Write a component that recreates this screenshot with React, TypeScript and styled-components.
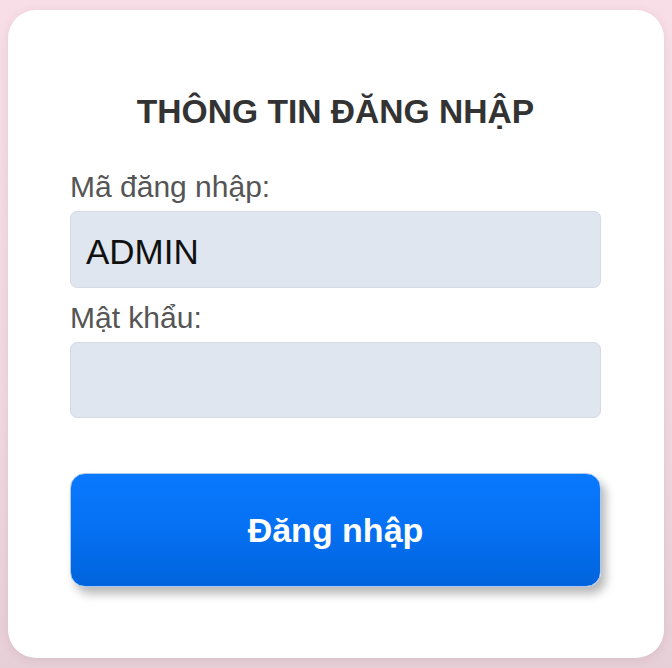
import { useState } from "react"
import styled, { createGlobalStyle } from "styled-components"

const GlobalStyle = createGlobalStyle`
    html, body {
        margin: 0;
        padding: 0;
        height: 100%;
    }
    body {
        font-family: "Liberation Sans", Arial, sans-serif;
        background: linear-gradient(180deg, #f8dee7 0%, #f2d8e1 60%, #e7cfd7 100%);
    }
    #root {
        min-height: 100%;
    }
`

const Page = styled.div`
    min-height: 668px;
    box-sizing: border-box;
    padding: 10px 8px 10px 8px;
    display: flex;
    justify-content: center;
    align-items: flex-start;
`

const Card = styled.form`
    width: 656px;
    box-sizing: border-box;
    padding: 82px 63px 71px 62px;
    background: #ffffff;
    border-radius: 28px;
    box-shadow: 0 2px 10px rgba(120, 60, 80, 0.12);
    display: flex;
    flex-direction: column;
`

const Title = styled.h2`
    margin: 0 0 37px;
    font-size: 33.6px;
    line-height: 40px;
    font-weight: 700;
    color: #333333;
    text-align: center;
`

const Label = styled.label<{ $gapTop?: number }>`
    display: block;
    margin-top: ${(p) => p.$gapTop ?? 0}px;
    margin-bottom: 6px;
    font-size: 30px;
    line-height: 36px;
    color: #555555;
`

const Input = styled.input<{ $height: number }>`
    display: block;
    width: 100%;
    height: ${(p) => p.$height}px;
    box-sizing: border-box;
    padding: 4px 15px 0;
    border: 1px solid #d4dbe5;
    border-radius: 7px;
    background: #dfe6f0;
    font-family: "Liberation Sans", Arial, sans-serif;
    font-size: 35px;
    color: #111111;
    outline: none;
`

const SubmitButton = styled.button`
    margin-top: 55px;
    height: 114px;
    width: 100%;
    border: 1px solid #a9c9f2;
    border-radius: 15px;
    background: linear-gradient(180deg, #0a79ff 0%, #0570f2 50%, #0064dc 100%);
    box-shadow: 5px 7px 10px rgba(0, 0, 0, 0.28);
    color: #ffffff;
    font-family: "Liberation Sans", Arial, sans-serif;
    font-size: 34px;
    font-weight: 700;
    cursor: pointer;
`

export default function App() {
    const [username, setUsername] = useState("ADMIN")
    const [password, setPassword] = useState("")

    return (
        <>
            <GlobalStyle />
            <Page>
                <Card onSubmit={(e) => e.preventDefault()}>
                    <Title>THÔNG TIN ĐĂNG NHẬP</Title>
                    <Label htmlFor="username">Mã đăng nhập:</Label>
                    <Input
                        id="username"
                        $height={77}
                        value={username}
                        onChange={(e) => setUsername(e.target.value)}
                    />
                    <Label htmlFor="password" $gapTop={12}>Mật khẩu:</Label>
                    <Input
                        id="password"
                        type="password"
                        $height={76}
                        value={password}
                        onChange={(e) => setPassword(e.target.value)}
                    />
                    <SubmitButton type="submit">Đăng nhập</SubmitButton>
                </Card>
            </Page>
        </>
    )
}
